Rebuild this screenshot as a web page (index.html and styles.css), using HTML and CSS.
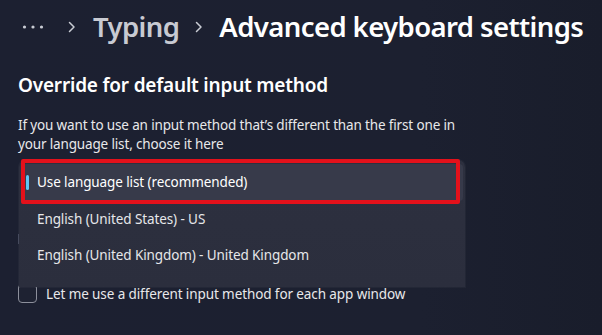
FILE: index.html
```html
<!DOCTYPE html>
<html lang="en">
<head>
<meta charset="utf-8">
<link rel="stylesheet" href="styles.css">
</head>
<body>
<div class="page">
  <header class="crumbs">
    <span class="more">
      <svg width="22" height="6" viewBox="0 0 22 6"><circle cx="2.5" cy="3" r="1.6" fill="#c9ccd4"/><circle cx="11" cy="3" r="1.6" fill="#c9ccd4"/><circle cx="19.5" cy="3" r="1.6" fill="#c9ccd4"/></svg>
    </span>
    <span class="chev"><svg width="8" height="12" viewBox="0 0 8 12"><path d="M1.5 1.5 L6 6 L1.5 10.5" fill="none" stroke="#c9ccd4" stroke-width="1.5" stroke-linecap="round" stroke-linejoin="round"/></svg></span>
    <span class="crumb">Typing</span>
    <span class="chev"><svg width="8" height="12" viewBox="0 0 8 12"><path d="M1.5 1.5 L6 6 L1.5 10.5" fill="none" stroke="#c9ccd4" stroke-width="1.5" stroke-linecap="round" stroke-linejoin="round"/></svg></span>
    <span class="crumb current">Advanced keyboard settings</span>
  </header>

  <section class="section">
    <h2 class="heading">Override for default input method</h2>
    <p class="desc">If you want to use an input method that’s different than the first one in<br>your language list, choose it here</p>

    <div class="combo-area">
      <div class="under">
        <div class="under-label"><span class="glimpse"></span></div>
        <label class="check-row">
          <span class="box"></span>
          <span class="check-text">Let me use a different input method for each app window</span>
        </label>
      </div>

      <div class="popup">
        <div class="item selected"><span class="accent"></span>Use language list (recommended)</div>
        <div class="item">English (United States) - US</div>
        <div class="item">English (United Kingdom) - United Kingdom</div>
      </div>
      <div class="annot"></div>
    </div>
  </section>
</div>
</body>
</html>
```
FILE: styles.css
```css
html, body {
  margin: 0;
  padding: 0;
}
body {
  width: 602px;
  height: 335px;
  overflow: hidden;
  background: linear-gradient(90deg, #1c2031 0%, #1c2030 70%, #191d2b 100%);
  font-family: "Noto Sans", "Open Sans", sans-serif;
  color: #ffffff;
}
.page {
  padding: 0 0 0 18px;
}
.crumbs {
  display: flex;
  align-items: center;
  height: 54px;
  white-space: nowrap;
}
.more {
  display: flex;
  align-items: center;
  margin-left: 4px;
  width: 22px;
  height: 54px;
}
.chev {
  display: flex;
  align-items: center;
  margin: 0 17px 0 24px;
}
.crumb + .chev {
  margin-left: 16px;
  margin-right: 16px;
}
.crumb {
  font-size: 27.5px;
  font-weight: 600;
  color: #c8cad2;
  letter-spacing: -0.6px;
  line-height: 54px;
}
.crumb.current {
  color: #ffffff;
}
.section {
  padding-top: 18px;
}
.heading {
  margin: 0;
  font-size: 19px;
  font-weight: 600;
  line-height: 26px;
  letter-spacing: -0.2px;
  color: #ffffff;
}
.desc {
  margin: 18px 0 0;
  font-size: 13.5px;
  line-height: 19px;
  letter-spacing: -0.15px;
  color: #e8e8ea;
}
.combo-area {
  position: relative;
  height: 170px;
}
.under {
  padding-top: 78px;
}
.under-label {
  height: 52px;
  position: relative;
}
.glimpse {
  position: absolute;
  left: 0;
  top: 2px;
  width: 2px;
  height: 10px;
  background: #5a6074;
  opacity: 0.6;
}
.check-row {
  display: flex;
  align-items: center;
  gap: 9px;
}
.box {
  width: 17px;
  height: 17px;
  border: 1px solid #8c8f9b;
  border-radius: 4px;
  background: #1e2232;
}
.check-text {
  font-size: 13.5px;
  letter-spacing: -0.1px;
  color: #e8e8ea;
}
.popup {
  position: absolute;
  left: 1px;
  top: 6px;
  width: 446px;
  height: 127px;
  box-sizing: border-box;
  padding: 4px 2px 0;
  background: linear-gradient(180deg, #2d303f 0%, #2b2e3d 100%);
  border-radius: 7px 7px 0 0;
  box-shadow: 0 0 0 1px rgba(255,255,255,0.03);
}
.item {
  position: relative;
  height: 36.5px;
  display: flex;
  align-items: center;
  padding-left: 16px;
  font-size: 13.5px;
  letter-spacing: -0.1px;
  color: #e6e7ea;
  border-radius: 4px;
}
.item.selected {
  background: #373a4a;
  color: #ffffff;
}
.accent {
  position: absolute;
  left: 5px;
  top: 11px;
  width: 3px;
  height: 15px;
  border-radius: 2px;
  background: #5fc6f5;
}
.annot {
  position: absolute;
  left: 3px;
  top: 5px;
  width: 439px;
  height: 45px;
  box-sizing: border-box;
  border: 4px solid #e3111b;
  border-radius: 2px;
}
```
